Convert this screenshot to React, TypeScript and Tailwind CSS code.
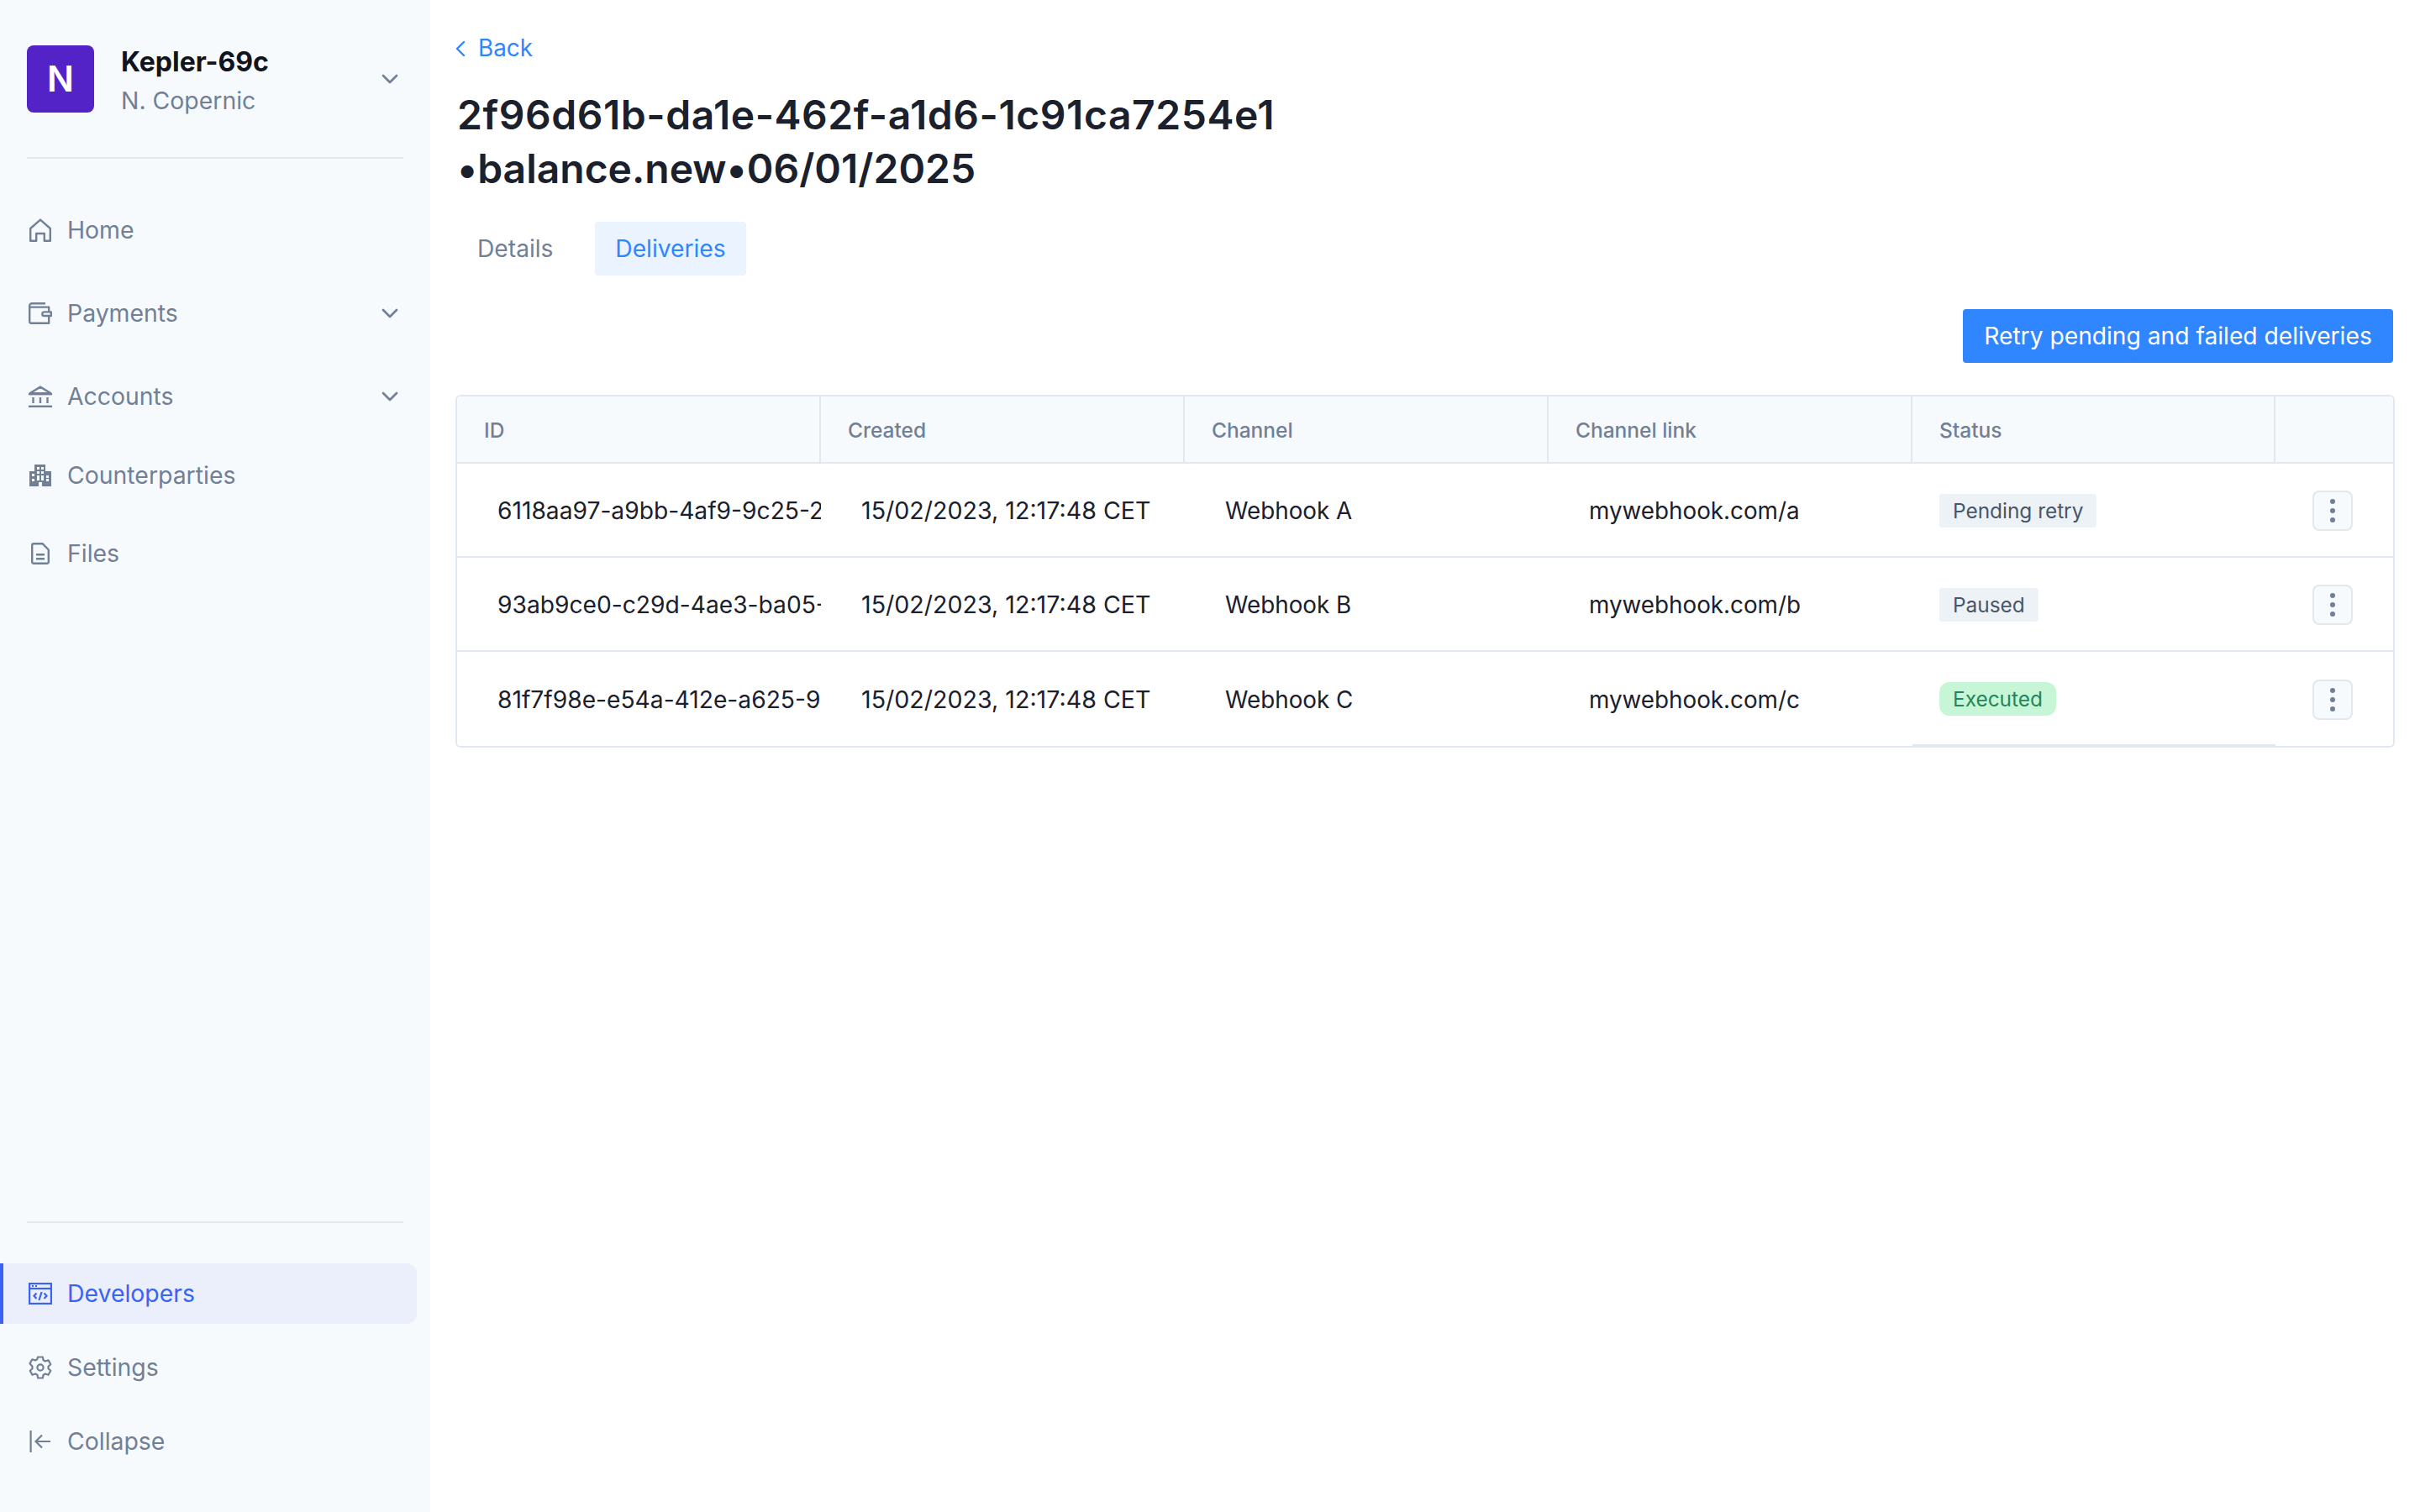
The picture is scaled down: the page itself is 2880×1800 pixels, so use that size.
import React from "react";
import { ChevronDown, ChevronLeft } from "lucide-react";

const font = "font-['Inter','Liberation_Sans',sans-serif]";

function HomeIcon() {
  return (
    <svg viewBox="0 0 26 28" className="w-[26px] h-[28px]" fill="none" stroke="currentColor" strokeWidth="2.4" strokeLinejoin="round">
      <path d="M1.2 26.8V12L13 1.6 24.8 12v14.8h-7V18H8.2v8.8z" />
    </svg>
  );
}
function WalletIcon() {
  return (
    <svg viewBox="0 0 28 26" className="w-[28px] h-[26px]" fill="none" stroke="currentColor" strokeWidth="2.4" strokeLinejoin="round">
      <path d="M20 1.2H4A2.8 2.8 0 0 0 1.2 4v19A1.8 1.8 0 0 0 3 24.8h21.2V5.6H1.6" />
      <path d="M18.6 11.4h8.2v4.6h-8.2a2.3 2.3 0 0 1 0-4.6z" fill="#f7fafc" />
    </svg>
  );
}
function BankIcon() {
  return (
    <svg viewBox="0 0 28 26" className="w-[28px] h-[26px]" fill="none" stroke="currentColor" strokeWidth="2.4">
      <path d="M1.5 9.2 14 1.6l12.5 7.6z" strokeLinejoin="round" />
      <path d="M0 10.2h28" />
      <path d="M5.5 14v7M14 14v7M22.5 14v7" />
      <path d="M0 24.8h28" />
    </svg>
  );
}
function BuildingIcon() {
  return (
    <svg viewBox="0 0 26 26" className="w-[26px] h-[26px]" fill="currentColor">
      <path fillRule="evenodd" d="M6 0h13v8h7v18H15v-5h-4v5H0V8h6zM9 3v3h3V3zm5 0v3h3V3zM9 8v3h3V8zm5 0v3h3V8zM3 11v3h3v-3zm6 2v3h3v-3zm5 0v3h3v-3zm6 0v3h3v-3zM3 17v3h3v-3zm17 0v3h3v-3zm-6-1v3h3v-3zm-5 0v3h3v-3z" />
    </svg>
  );
}
function FileIcon() {
  return (
    <svg viewBox="0 0 22 26" className="w-[22px] h-[26px]" fill="none" stroke="currentColor" strokeWidth="2.4" strokeLinejoin="round">
      <path d="M3 1.2h10.5l7.3 7.3V23a1.8 1.8 0 0 1-1.8 1.8H3A1.8 1.8 0 0 1 1.2 23V3A1.8 1.8 0 0 1 3 1.2z" />
      <path d="M6 14.2h10M6 19.2h10" />
    </svg>
  );
}
function GearIcon() {
  return (
    <svg viewBox="0 0 28 28" className="w-[28px] h-[28px]" fill="none" stroke="currentColor" strokeWidth="2.2" strokeLinejoin="round">
      <path d="M11.2 1.5h5.6l.8 3.7 2.3 1.3 3.6-1.2 2.8 4.9-2.8 2.5v2.6l2.8 2.5-2.8 4.9-3.6-1.2-2.3 1.3-.8 3.7h-5.6l-.8-3.7-2.3-1.3-3.6 1.2-2.8-4.9 2.8-2.5v-2.6L1.5 9.2l2.8-4.9 3.6 1.2 2.3-1.3z" />
      <circle cx="14" cy="14" r="3.6" />
    </svg>
  );
}
function CollapseIcon() {
  return (
    <svg viewBox="0 0 26 26" className="w-[26px] h-[26px]" fill="none" stroke="currentColor" strokeWidth="2.2">
      <path d="M1.6 0v26M25 13H8M15 5.5 7.5 13l7.5 7.5" />
    </svg>
  );
}
function DevIcon() {
  return (
    <svg viewBox="0 0 28 26" className="w-[28px] h-[26px]" fill="none" stroke="currentColor" strokeWidth="2.2">
      <rect x="1.1" y="1.1" width="25.8" height="23.8" />
      <path d="M1 7h26" />
      <path d="M4 4h2M8 4h2" />
      <path d="M9.5 12.5 6.5 15.8l3 3.2M18.5 12.5l3 3.3-3 3.2M15.6 11l-3.2 10" />
    </svg>
  );
}

function NavItem({ icon, label, chev }: { icon: React.ReactNode; label: string; chev?: boolean }) {
  return (
    <div className="flex items-center h-[60px] pl-[32px] pr-[32px] text-[#718096]">
      <span className="w-[32px] flex justify-center">{icon}</span>
      <span className="ml-[16px] flex-1 text-[28.4px]">{label}</span>
      {chev && <ChevronDown size={32} strokeWidth={2} />}
    </div>
  );
}

function Dots() {
  return (
    <svg viewBox="0 0 8 32" className="w-[8px] h-[32px]" fill="currentColor">
      <circle cx="4" cy="5" r="3" />
      <circle cx="4" cy="16" r="3" />
      <circle cx="4" cy="27" r="3" />
    </svg>
  );
}

const rows = [
  ["6118aa97-a9bb-4af9-9c25-2f3b6d1e7a40", "Webhook A", "mywebhook.com/a", "Pending retry", "gray"],
  ["93ab9ce0-c29d-4ae3-ba05-7c1de42f90b1", "Webhook B", "mywebhook.com/b", "Paused", "gray"],
  ["81f7f98e-e54a-412e-a625-9b0e3c7d5a26", "Webhook C", "mywebhook.com/c", "Executed", "green"],
];

export default function App() {
  return (
    <div className={`flex h-screen w-full bg-white ${font}`}>
      <aside className="w-[512px] shrink-0 bg-[#f7fafc] flex flex-col">
        <div className="flex items-center h-[189px] mx-[32px] border-b-2 border-[#e2e8f0]">
          <div className="w-[80px] h-[80px] rounded-[8px] bg-[#5323c8] text-white flex items-center justify-center text-[42px] font-semibold">N</div>
          <div className="ml-[32px] flex-1 pt-[6px]">
            <div className="text-[32px] leading-[46px] font-bold text-[#0f1420]">Kepler-69c</div>
            <div className="text-[28.4px] leading-[46px] text-[#718096]">N. Copernic</div>
          </div>
          <ChevronDown size={32} strokeWidth={2} className="text-[#718096]" />
        </div>
        <nav className="mt-[55px] flex flex-col gap-[39px]">
          <NavItem icon={<HomeIcon />} label="Home" />
          <NavItem icon={<WalletIcon />} label="Payments" chev />
          <NavItem icon={<BankIcon />} label="Accounts" chev />
          <div className="-mt-[5px]"><NavItem icon={<BuildingIcon />} label="Counterparties" /></div>
          <div className="-mt-[6px]"><NavItem icon={<FileIcon />} label="Files" /></div>
        </nav>
        <div className="mt-auto mx-[32px] border-t-2 border-[#e2e8f0]" />
        <div className="mt-[48px] mr-[16px] h-[72px] flex items-center rounded-r-[12px] bg-[#ebeffb] border-l-4 border-[#3a63f3] pl-[30px] text-[#3a63f3]">
          <span className="w-[28px] flex justify-center"><DevIcon /></span>
          <span className="ml-[18px] text-[28.4px]">Developers</span>
        </div>
        <div className="mt-[22px] flex flex-col gap-[28px] mb-[54px]">
          <NavItem icon={<GearIcon />} label="Settings" />
          <NavItem icon={<CollapseIcon />} label="Collapse" />
        </div>
      </aside>
      <main className="flex-1 min-w-0 pl-[30px] pr-[30px] pt-[36px]">
        <div className="flex items-center h-[44px] text-[#2f86ff] text-[27.8px]">
          <ChevronLeft size={32} strokeWidth={1.8} className="-ml-[10px]" />
          <span className="ml-[5px]">Back</span>
        </div>
        <h1 className="mt-[25px] pl-[2px] w-[1100px] text-[48px] leading-[64px] font-semibold text-[#1a202c]">
          <span className="tracking-[0.55px]">2f96d61b-da1e-462f-a1d6-1c91ca7254e1</span><br />•balance.new•06/01/2025
        </h1>
        <div className="mt-[31px] flex h-[64px] items-center text-[28.2px]">
          <div className="h-full w-[166px] pl-[26px] flex items-center text-[#718096]">Details</div>
          <div className="h-full w-[180px] rounded-[4px] bg-[#ebf3fe] flex items-center justify-center text-[#2f86ff]">Deliveries</div>
        </div>
        <div className="mt-[40px] flex justify-end pr-[2px]">
          <button className="h-[64px] w-[512px] rounded-[4px] bg-[#2f86ff] text-white text-[28.2px]">Retry pending and failed deliveries</button>
        </div>
        <div className="mt-[38px] w-[2308px] border-2 border-[#e2e8f0] rounded-[6px] overflow-hidden">
          <div className="grid grid-cols-[433px_433px_433px_433px_432px_1fr] h-[80px] bg-[#f7fafc] border-b-2 border-[#e2e8f0] text-[24.5px] font-medium text-[#718096]">
            {["ID", "Created", "Channel", "Channel link", "Status", ""].map((h, i) => (
              <div key={i} className={`flex items-center pl-[32px] pt-[2px] ${i < 5 ? "border-r-2 border-[#e2e8f0]" : ""}`}>{h}</div>
            ))}
          </div>
          {rows.map((r, i) => (
            <div key={r[0]} className={`grid grid-cols-[433px_433px_433px_433px_432px_1fr] h-[112px] text-[27.8px] text-[#1a202c] ${i < 2 ? "border-b-2 border-[#e2e8f0]" : ""}`}>
              <div className="flex items-center pl-[48px] pt-[3px] overflow-hidden whitespace-nowrap text-[28.2px]">{r[0]}</div>
              <div className="flex items-center pl-[48px] pt-[3px] whitespace-nowrap text-[28.6px]">15/02/2023, 12:17:48 CET</div>
              <div className="flex items-center pl-[48px] pt-[3px]">{r[1]}</div>
              <div className="flex items-center pl-[48px] pt-[3px]">{r[2]}</div>
              <div className={`flex items-center pl-[32px] ${i === 2 ? "border-b-2 border-[#e2e8f0] pt-[2px]" : "pt-[2px]"}`}>
                {r[4] === "green" ? (
                  <span className="h-[40px] px-[16px] flex items-center rounded-[12px] bg-[#c6f6d5] text-[#25855a] text-[24.4px]">{r[3]}</span>
                ) : (
                  <span className="h-[40px] px-[16px] flex items-center rounded-[4px] bg-[#edf2f7] text-[#4a5568] text-[24.4px]">{r[3]}</span>
                )}
              </div>
              <div className="flex items-center justify-center pr-[4px] pt-[1px]">
                <div className="w-[48px] h-[48px] rounded-[8px] border-2 border-[#e2e8f0] bg-[#f7fafc] flex items-center justify-center text-[#718096]">
                  <Dots />
                </div>
              </div>
            </div>
          ))}
        </div>
      </main>
    </div>
  );
}
